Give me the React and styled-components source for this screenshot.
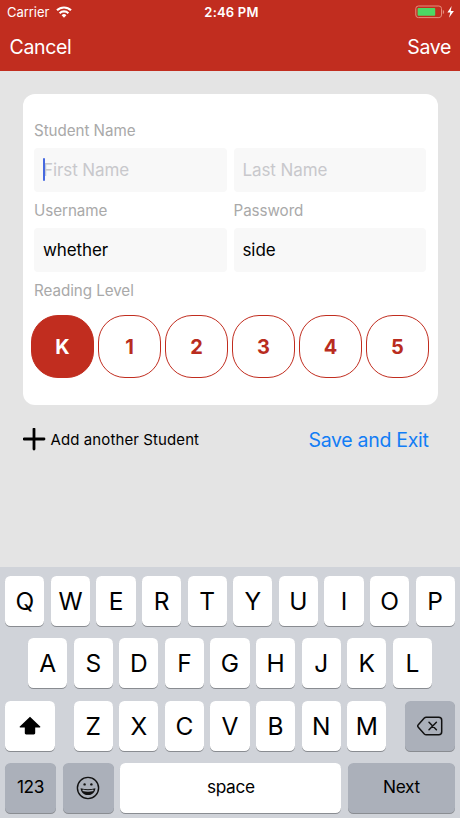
import React, { useState } from 'react';
import styled, { createGlobalStyle } from 'styled-components';

const LEVELS = ['K', '1', '2', '3', '4', '5'];

const App = () => {
  const [level, setLevel] = useState('K');

  return (
    <Screen>
      <GlobalStyle />
      <Header>
        <StatusBar>
          <Carrier>
            Carrier
            <WifiIcon />
          </Carrier>
          <Time>2:46 PM</Time>
          <BatteryIcon />
        </StatusBar>
        <NavBar>
          <NavButton>Cancel</NavButton>
          <NavButton>Save</NavButton>
        </NavBar>
      </Header>

      <Content>
        <Card>
          <Label>Student Name</Label>
          <FieldRow>
            <Field $empty>
              <Caret />
              First Name
            </Field>
            <Field $empty>Last Name</Field>
          </FieldRow>
          <FieldRow>
            <Label>Username</Label>
            <Label>Password</Label>
          </FieldRow>
          <FieldRow>
            <Field>whether</Field>
            <Field>side</Field>
          </FieldRow>
          <Label>Reading Level</Label>
          <Levels>
            {LEVELS.map((item) => (
              <Level key={item} $active={item === level} onClick={() => setLevel(item)}>
                {item}
              </Level>
            ))}
          </Levels>
        </Card>

        <Actions>
          <AddButton>
            <PlusIcon />
            Add another Student
          </AddButton>
          <SaveButton>Save and Exit</SaveButton>
        </Actions>
      </Content>

      <Keyboard>
        <KeyRow>
          {'QWERTYUIOP'.split('').map((key) => <Key key={key}>{key}</Key>)}
        </KeyRow>
        <KeyRow>
          {'ASDFGHJKL'.split('').map((key) => <Key key={key}>{key}</Key>)}
        </KeyRow>
        <KeyRow $spread>
          <Key $width="50px"><ShiftIcon /></Key>
          <KeyGroup>
            {'ZXCVBNM'.split('').map((key) => <Key key={key}>{key}</Key>)}
          </KeyGroup>
          <Key $width="50px" $dark><DeleteIcon /></Key>
        </KeyRow>
        <KeyRow $spread>
          <Key $width="51px" $dark $small>123</Key>
          <Key $width="51px" $dark><SmileIcon /></Key>
          <Key $width="221px" $small>space</Key>
          <Key $width="107px" $dark $small>Next</Key>
        </KeyRow>
      </Keyboard>
    </Screen>
  );
};

const WifiIcon = () => (
  <svg width="16" height="12" viewBox="0 0 16 12" fill="none" stroke="#fff" strokeWidth="2.1">
    <path d="M1 4.3a10 10 0 0 1 14 0" />
    <path d="M3.6 7.2a6.3 6.3 0 0 1 8.8 0" />
    <path d="M8 11.7 5.6 9.3a3.4 3.4 0 0 1 4.8 0z" fill="#fff" stroke="none" />
  </svg>
);

const BatteryIcon = () => (
  <svg width="40" height="14" viewBox="0 0 40 14">
    <rect x="0.8" y="1" width="25.7" height="11.6" rx="2.6" fill="none" stroke="#e58e7c" />
    <rect x="2.6" y="2.9" width="17.6" height="7.8" rx="0.8" fill="#4cd964" />
    <path d="M27.8 5v4c1-.4 1.3-1 1.3-2s-.3-1.6-1.3-2z" fill="#e58e7c" />
    <path d="M36.6 1 32.4 7.6h2.9L34 12.8l4.9-6.9h-3.1z" fill="#fff" />
  </svg>
);

const PlusIcon = () => (
  <svg width="23" height="23" viewBox="0 0 23 23" stroke="#000" strokeWidth="2.8" strokeLinecap="round">
    <path d="M11 1v20M1 11h20" />
  </svg>
);

const ShiftIcon = () => (
  <svg width="22" height="19" viewBox="0 0 22 19">
    <path
      d="M11 .8 21.2 10.6c.4.4.2.8-.3.8h-4.7v5.7c0 .9-.5 1.4-1.4 1.4H7.2c-.9 0-1.4-.5-1.4-1.4v-5.7H1.1c-.5 0-.7-.4-.3-.8z"
      fill="#000"
    />
  </svg>
);

const DeleteIcon = () => (
  <svg
    width="26"
    height="20"
    viewBox="0 0 26 20"
    fill="none"
    stroke="#111"
    strokeWidth="1.5"
    strokeLinecap="round"
    strokeLinejoin="round"
  >
    <path d="M9.2 1.2h12.5a3 3 0 0 1 3 3v11.6a3 3 0 0 1-3 3H9.2c-.8 0-1.4-.3-1.9-.8L1.3 11.2c-.7-.7-.7-1.7 0-2.4L7.3 2c.5-.5 1.1-.8 1.9-.8z" />
    <path d="m12 6.3 7.4 7.4M19.4 6.3 12 13.7" />
  </svg>
);

const SmileIcon = () => (
  <svg width="24" height="24" viewBox="0 0 24 24" fill="none" stroke="#111" strokeWidth="1.4">
    <circle cx="12" cy="12" r="10.6" />
    <circle cx="8.6" cy="8.4" r="1.2" fill="#111" stroke="none" />
    <circle cx="15.4" cy="8.4" r="1.2" fill="#111" stroke="none" />
    <path d="M4.6 12.2c4.7 1.5 10.1 1.5 14.8 0-.3 4.2-3.4 6.9-7.4 6.9s-7.1-2.7-7.4-6.9z" fill="#111" stroke="none" />
    <path d="M6.6 14.3c3.5.9 7.3.9 10.8 0" stroke="#abb0ba" strokeWidth="1.5" />
  </svg>
);

const GlobalStyle = createGlobalStyle`
  * {
    box-sizing: border-box;
  }

  body {
    margin: 0;
  }

  button {
    border: none;
    padding: 0;
    margin: 0;
    background: none;
    color: inherit;
    font: inherit;
    cursor: pointer;
  }

  svg {
    display: block;
    flex-shrink: 0;
  }
`;

const Screen = styled.div`
  display: flex;
  flex-direction: column;
  height: 818px;
  overflow: hidden;
  background: #e4e4e4;
  color: #000;
  font-family: Inter, 'Liberation Sans', sans-serif;
`;

const Header = styled.header`
  height: 71px;
  background: #c12d1f;
  color: #fff;
`;

const StatusBar = styled.div`
  display: grid;
  grid-template-columns: 1fr auto 1fr;
  align-items: center;
  height: 24px;
  padding: 0 5px 0 7px;
  font-size: 13px;

  > svg {
    justify-self: end;
  }
`;

const Carrier = styled.div`
  display: flex;
  align-items: center;
  gap: 6.5px;
  letter-spacing: -0.05px;
`;

const Time = styled.div`
  padding-left: 1px;
  font-weight: 600;
  letter-spacing: 0.2px;
`;

const NavBar = styled.nav`
  display: flex;
  justify-content: space-between;
  align-items: center;
  height: 46px;
  padding: 0 9px 0 9.5px;
`;

const NavButton = styled.button`
  font-size: 19.5px;
  letter-spacing: -0.35px;
`;

const Content = styled.main`
  flex: 1;
  padding: 22.5px 22.5px 0;
`;

const Card = styled.section`
  height: 311px;
  padding: 18.5px 11.5px 0;
  border-radius: 12px;
  background: #fff;
`;

const Label = styled.div`
  height: 36px;
  color: #a9a9a9;
  font-size: 15.2px;
  line-height: 37.5px;
  letter-spacing: -0.06px;
`;

const FieldRow = styled.div`
  display: grid;
  grid-template-columns: 1fr 1fr;
  gap: 7px;
`;

const Field = styled.div`
  position: relative;
  height: 44px;
  padding-left: 9px;
  border-radius: 4px;
  background: #f8f8f8;
  color: ${(props) => (props.$empty ? '#c8c8cc' : '#000')};
  font-size: 17px;
  line-height: 44.5px;
  letter-spacing: -0.1px;
`;

// Text cursor, drawn over the placeholder
const Caret = styled.span`
  position: absolute;
  top: 10px;
  left: 8.5px;
  width: 2.5px;
  height: 23px;
  border-radius: 1px;
  background: #4669e0;
`;

const Levels = styled.div`
  display: flex;
  justify-content: space-between;
  margin: 7px -3px 0;
`;

const Level = styled.button`
  width: 63px;
  height: 63px;
  border: 1.3px solid #c12d1f;
  border-radius: 27px;
  background: ${(props) => (props.$active ? '#c12d1f' : '#fff')};
  color: ${(props) => (props.$active ? '#fff' : '#b92c20')};
  font-size: 20px;
  font-weight: 700;
`;

const Actions = styled.div`
  display: flex;
  justify-content: space-between;
  align-items: center;
  height: 32px;
  margin-top: 19px;
  padding-right: 9px;
`;

const AddButton = styled.button`
  display: flex;
  align-items: center;
  gap: 5px;
  font-size: 15px;
  line-height: 20px;
  letter-spacing: 0.1px;
`;

const SaveButton = styled.button`
  padding-top: 1px;
  color: #127df5;
  font-size: 19.5px;
  letter-spacing: -0.3px;
`;

const Keyboard = styled.div`
  display: flex;
  flex-direction: column;
  gap: 12.4px;
  height: 251px;
  padding: 9px 5px 0;
  background: #d0d3d9;
`;

const KeyRow = styled.div`
  display: flex;
  justify-content: ${(props) => (props.$spread ? 'space-between' : 'center')};
  gap: 6.4px;
`;

const KeyGroup = styled.div`
  display: flex;
  gap: 6.4px;
`;

const Key = styled.button`
  display: flex;
  justify-content: center;
  align-items: center;
  flex-shrink: 0;
  width: ${(props) => props.$width || '39.2px'};
  height: 50px;
  padding-bottom: ${(props) => (props.$small ? '3px' : '0')};
  border-radius: 5.5px;
  background: ${(props) => (props.$dark ? '#abb0ba' : '#fff')};
  box-shadow: 0 1px 0 #898c91;
  font-size: ${(props) => (props.$small ? '17.3px' : '24.5px')};
  letter-spacing: ${(props) => (props.$small ? '-0.35px' : '0')};
`;

export default App;
